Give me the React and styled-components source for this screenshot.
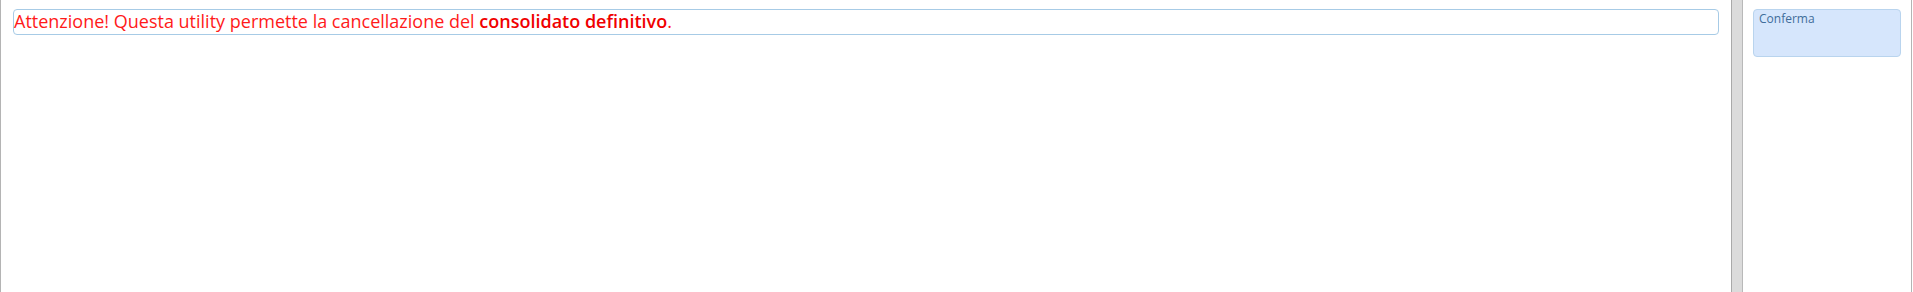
import React from 'react';
import styled, { createGlobalStyle } from 'styled-components';

const GlobalStyle = createGlobalStyle`
  html, body {
    margin: 0;
    padding: 0;
    background: #ffffff;
    font-family: "Open Sans", "Liberation Sans", sans-serif;
  }
`;

const Layout = styled.div`
  display: flex;
  height: 292px;
  width: 1913px;
`;

const Main = styled.div`
  flex: 0 0 1731px;
  box-sizing: border-box;
  border-left: 1px solid #b4b4b4;
  padding: 9px 12px 0 12px;
`;

const Notice = styled.div`
  box-sizing: border-box;
  height: 26px;
  border: 1px solid #a7cbe6;
  border-radius: 4px;
  color: #ff1a1a;
  font-size: 18px;
  line-height: 23px;
  white-space: nowrap;

  strong {
    font-weight: 600;
    color: #f00000;
  }
`;

const Splitter = styled.div`
  flex: 0 0 12px;
  box-sizing: border-box;
  background: #dbdbdb;
  border-left: 1px solid #a9a9a9;
  border-right: 1px solid #b9b9b9;
`;

const Side = styled.div`
  flex: 0 0 169px;
  box-sizing: border-box;
  border-right: 1px solid #b4b4b4;
  padding: 9px 0 0 10px;
`;

const ConfirmButton = styled.button`
  box-sizing: border-box;
  display: block;
  width: 148px;
  height: 48px;
  background: #d6e6fc;
  border: 1px solid #b9d4ee;
  border-radius: 4px;
  padding: 1px 0 0 5px;
  text-align: left;
  font-family: "Open Sans", "Liberation Sans", sans-serif;
  font-size: 12px;
  line-height: 15px;
  color: #3f6d9a;
  cursor: pointer;

  span {
    display: block;
    height: 100%;
  }
`;

export default function App() {
  return (
    <>
      <GlobalStyle />
      <Layout>
        <Main>
          <Notice>
            Attenzione! Questa utility permette la cancellazione del <strong>consolidato definitivo</strong>.
          </Notice>
        </Main>
        <Splitter />
        <Side>
          <ConfirmButton type="button">
            <span>Conferma</span>
          </ConfirmButton>
        </Side>
      </Layout>
    </>
  );
}
